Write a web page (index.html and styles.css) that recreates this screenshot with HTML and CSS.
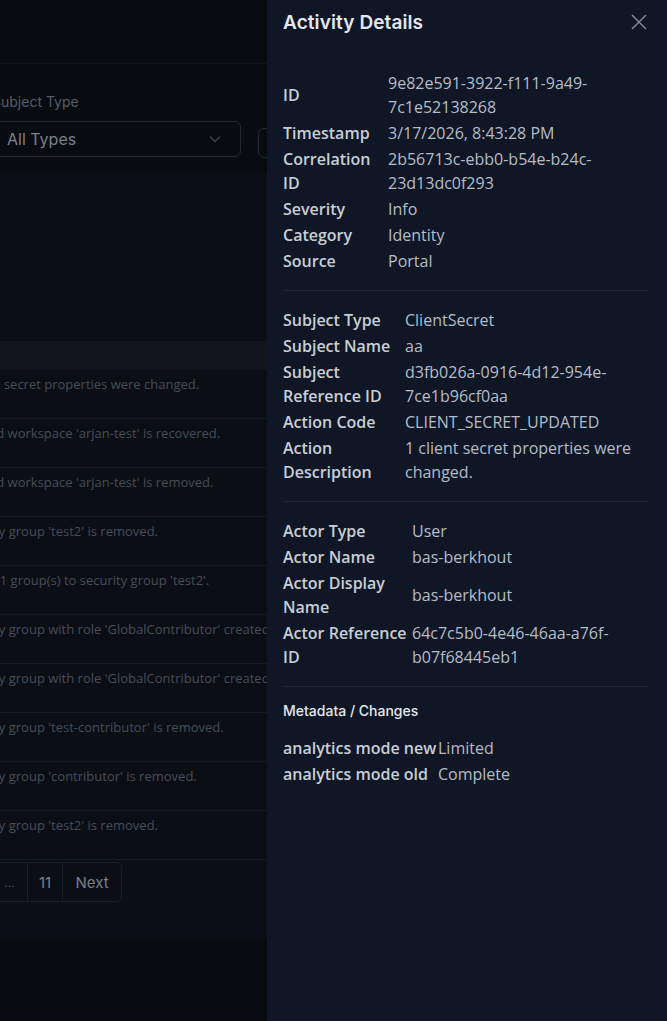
FILE: index.html
```html
<!DOCTYPE html>
<html lang="en">
<head>
<meta charset="utf-8">
<title>Activity Details</title>
<link rel="stylesheet" href="styles.css">
</head>
<body>
<div class="page">
  <div class="page-inner">
    <header class="topbar"></header>
    <div class="filters">
      <div class="filter">
        <label class="filter-label">Subject Type</label>
        <div class="select">
          <span>All Types</span>
          <svg class="chev" width="12" height="8" viewBox="0 0 12 8"><path d="M1 1.5 L6 6.5 L11 1.5" fill="none" stroke="currentColor" stroke-width="1.4"/></svg>
        </div>
      </div>
      <div class="filter filter-next">
        <div class="select select-small"></div>
      </div>
    </div>
    <section class="card">
      <div class="table">
        <div class="thead"></div>
        <div class="row"><div class="cell">1 client secret properties were changed.</div></div>
        <div class="row"><div class="cell">Deleted workspace 'arjan-test' is recovered.</div></div>
        <div class="row"><div class="cell">Deleted workspace 'arjan-test' is removed.</div></div>
        <div class="row"><div class="cell">Security group 'test2' is removed.</div></div>
        <div class="row"><div class="cell">Added 1 group(s) to security group 'test2'.</div></div>
        <div class="row"><div class="cell">Security group with role 'GlobalContributor' created.</div></div>
        <div class="row"><div class="cell">Security group with role 'GlobalContributor' created.</div></div>
        <div class="row"><div class="cell">Security group 'test-contributor' is removed.</div></div>
        <div class="row"><div class="cell">Security group 'contributor' is removed.</div></div>
        <div class="row"><div class="cell">Security group 'test2' is removed.</div></div>
      </div>
      <nav class="pager">
        <span class="pg pg-dots">...</span>
        <span class="pg pg-num">11</span>
        <span class="pg pg-next">Next</span>
      </nav>
    </section>
  </div>
</div>

<aside class="drawer">
  <div class="drawer-head">
    <h2 class="drawer-title">Activity Details</h2>
    <button class="close" aria-label="Close">
      <svg width="16" height="16" viewBox="0 0 16 16"><path d="M1 1 L15 15 M15 1 L1 15" fill="none" stroke="currentColor" stroke-width="1.5"/></svg>
    </button>
  </div>
  <div class="drawer-body">
    <div class="section sec-1">
      <div class="k">ID</div><div class="v">9e82e591-3922-f111-9a49-7c1e52138268</div>
      <div class="k">Timestamp</div><div class="v">3/17/2026, 8:43:28 PM</div>
      <div class="k">Correlation ID</div><div class="v">2b56713c-ebb0-b54e-b24c-23d13dc0f293</div>
      <div class="k">Severity</div><div class="v">Info</div>
      <div class="k">Category</div><div class="v">Identity</div>
      <div class="k">Source</div><div class="v">Portal</div>
    </div>
    <div class="section sec-2">
      <div class="k">Subject Type</div><div class="v">ClientSecret</div>
      <div class="k">Subject Name</div><div class="v">aa</div>
      <div class="k">Subject Reference ID</div><div class="v">d3fb026a-0916-4d12-954e-7ce1b96cf0aa</div>
      <div class="k">Action Code</div><div class="v">CLIENT_SECRET_UPDATED</div>
      <div class="k">Action Description</div><div class="v">1 client secret properties were changed.</div>
    </div>
    <div class="section sec-3">
      <div class="k">Actor Type</div><div class="v">User</div>
      <div class="k">Actor Name</div><div class="v">bas-berkhout</div>
      <div class="k">Actor Display Name</div><div class="v">bas-berkhout</div>
      <div class="k">Actor Reference ID</div><div class="v">64c7c5b0-4e46-46aa-a76f-b07f68445eb1</div>
    </div>
    <div class="meta">
      <h3 class="meta-title">Metadata / Changes</h3>
      <div class="section sec-meta">
        <div class="k nowrap">analytics mode new</div><div class="v">Limited</div>
        <div class="k nowrap">analytics mode old</div><div class="v">Complete</div>
      </div>
    </div>
  </div>
</aside>
</body>
</html>
```
FILE: styles.css
```css
* { box-sizing: border-box; }
html, body { margin: 0; padding: 0; }
body {
  background: #080b10;
  font-family: "Open Sans", "Noto Sans", sans-serif;
  height: 1021px;
  overflow: hidden;
}

/* ---------- dimmed background page ---------- */
.page {
  width: 267px;
  height: 1021px;
  overflow: hidden;
}
.page-inner {
  width: 700px;
  margin-left: -60px;
}
.topbar {
  height: 64px;
  border-bottom: 1px solid #11151c;
}
.filters {
  display: flex;
  gap: 17px;
  padding-left: 52px;
  padding-top: 29px;
  height: 108px;
}
.filter { display: flex; flex-direction: column; }
.filter-label {
  font-family: "Inter", sans-serif;
  font-size: 14px;
  line-height: 18px;
  color: #575c65;
  margin-bottom: 10px;
}
.select {
  width: 249px;
  height: 36px;
  border: 1px solid #23272f;
  border-radius: 6px;
  display: flex;
  align-items: center;
  justify-content: space-between;
  padding: 0 19px 0 14px;
  font-family: "Inter", sans-serif;
  font-size: 16px;
  color: #7b8089;
}
.chev { color: #3f444d; }
.filter-next { padding-top: 35px; }
.select-small { width: 200px; height: 30px; border-radius: 6px; }

.card {
  background: #0b0e15;
  height: 769px;
  padding-top: 169px;
}
.thead {
  height: 29px;
  background: #12151c;
}
.row {
  height: 49px;
  border-bottom: 1px solid #161a22;
}
.cell {
  padding: 6px 0 0 17px;
  font-size: 13px;
  line-height: 16px;
  color: #474c55;
  white-space: nowrap;
}
.pager {
  display: flex;
  margin: 2px 0 0 51px;
  width: max-content;
  border: 1px solid #1a1e26;
  border-radius: 6px;
  height: 40px;
}
.pg {
  display: flex;
  align-items: center;
  justify-content: center;
  font-family: "Inter", sans-serif;
  font-size: 15px;
  color: #7b8089;
  border-left: 1px solid #1a1e26;
}
.pg:first-child { border-left: 0; }
.pg-dots { width: 35px; color: #4a4f58; font-size: 12px; }
.pg-num { width: 35px; }
.pg-next { width: 59px; }

/* ---------- drawer ---------- */
.drawer {
  position: fixed;
  top: 0;
  right: 0;
  width: 400px;
  height: 1021px;
  background: #0f1726;
  color: #c3c9d2;
  padding: 0 19px 0 16px;
}
.drawer-head {
  height: 44px;
  display: flex;
  align-items: center;
  justify-content: space-between;
}
.drawer-title {
  margin: 0;
  font-family: "Inter", sans-serif;
  font-weight: 600;
  font-size: 19px;
  color: #e3e7ed;
  letter-spacing: 0.1px;
}
.close {
  background: none;
  border: 0;
  padding: 0;
  margin-right: 1px;
  width: 16px;
  height: 16px;
  color: #7f8692;
  display: flex;
}
.drawer-body { padding-top: 26px; }
.section {
  display: grid;
  align-items: center;
  font-size: 16px;
  line-height: 24px;
  padding-bottom: 16px;
  border-bottom: 1px solid #1e2636;
  margin-bottom: 16px;
}
.section .k, .section .v { padding: 1px 0; }
.k { font-weight: 600; color: #c9ced6; }
.v { color: #b6bcc6; }
.nowrap { white-space: nowrap; }
.sec-1 { grid-template-columns: 105px 1fr; }
.sec-2 { grid-template-columns: 122px 1fr; }
.sec-3 { grid-template-columns: 129px 1fr; }
.sec-meta { grid-template-columns: 155px 1fr; border-bottom: 0; }
.meta-title {
  margin: 0 0 16px;
  font-family: "Inter", sans-serif;
  font-weight: 500;
  font-size: 14px;
  line-height: 16px;
  color: #e3e7ed;
}
```
